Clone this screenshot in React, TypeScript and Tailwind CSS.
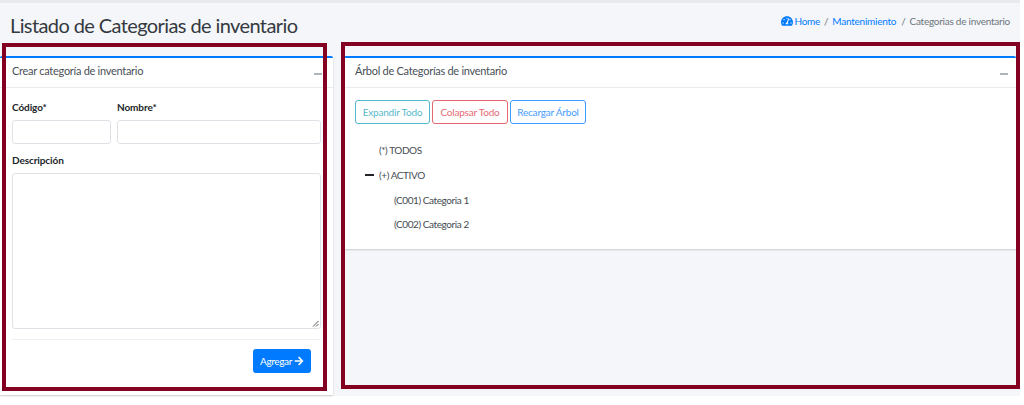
import React from "react";
import { FaTachometerAlt, FaArrowRight } from "react-icons/fa";

function Card({ title, children, className, dashCls, titleCls }: { title: string; children: React.ReactNode; className: string; dashCls: string; titleCls: string }) {
  return (
    <section className={`bg-white border-t-2 border-t-[#007bff] rounded-t-[2px] shadow-[0_1px_2px_rgba(0,0,0,0.18)] ${className}`}>
      <header className="h-[30px] flex items-center justify-between px-3 border-b border-[#e9ecef] text-[#495057] text-[11px] tracking-[-0.28px]">
        <span className={`mt-[-2px] ${titleCls}`}>{title}</span>
        <span className={`w-[8px] h-[1.5px] bg-[#adb5bd] mt-[3px] ${dashCls}`} />
      </header>
      {children}
    </section>
  );
}

function Row({ text, indent, dash }: { text: string; indent: string; dash?: boolean }) {
  return (
    <div className={`h-[24.67px] flex items-center text-[10px] tracking-[-0.42px] text-[#454c53] ${indent}`}>
      {dash && <span className="w-[9px] h-[2px] bg-[#212529] mr-[5px]" />}
      <span>{text}</span>
    </div>
  );
}

const inputCls = "block bg-white border border-[#dee2e6] rounded-[3px] h-[24px]";
const labelCls = "block text-[10px] font-bold tracking-[-0.1px] text-[#212529] leading-[14px]";
const btnCls = "h-[24px] border rounded-[3px] text-[10px] tracking-[-0.2px] whitespace-nowrap opacity-75";

export default function App() {
  return (
    <div className="relative w-[1024px] h-[405px] bg-white overflow-hidden font-['Lato','Noto_Sans',sans-serif]">
      <div className="w-[1020px] h-[396px] bg-[#f4f6f9] border-t-[3px] border-t-[#e9eaec] flex flex-col">
        <div className="h-[53px] flex items-start justify-between px-[10px] shrink-0">
          <h1 className="text-[20px] tracking-[-0.6px] leading-[28px] mt-[8px] text-[#343a40]">Listado de Categorias de inventario</h1>
          <nav className="flex items-center mt-[10px] text-[10px] tracking-[-0.25px] text-[#6c757d] leading-[16px]">
            <FaTachometerAlt size={12} className="text-[#007bff] mr-[1px]" />
            <span className="text-[#007bff]">Home</span>
            <span className="mx-[4px]">/</span>
            <span className="text-[#007bff]">Mantenimiento</span>
            <span className="ml-[5px] mr-[4px]">/</span>
            <span>Categorias de inventario</span>
          </nav>
        </div>
        <div className="flex items-start flex-1">
          <Card title="Crear categoría de inventario" className="w-[333px] h-[339px] flex flex-col" dashCls="mr-[-1px]" titleCls="">
            <div className="px-3 pt-[12px]">
              <div className="flex gap-[6px]">
                <div className="w-[99px]">
                  <label className={`${labelCls} mb-[6px]`}>Código*</label>
                  <div className={inputCls} />
                </div>
                <div className="w-[204px]">
                  <label className={`${labelCls} mb-[6px]`}>Nombre*</label>
                  <div className={inputCls} />
                </div>
              </div>
              <label className={`${labelCls} mt-[9px] mb-[6px]`}>Descripción</label>
              <div className="relative h-[156px] w-[309px] bg-white border border-[#dee2e6] rounded-[3px]">
                <svg className="absolute right-[1px] bottom-[1px]" width="7" height="7" viewBox="0 0 7 7">
                  <path d="M1 6.5 L6.5 1 M4 6.5 L6.5 4" stroke="#555" strokeWidth="1" fill="none" />
                </svg>
              </div>
              <div className="h-px bg-[#eef0f2] mt-[10px] w-[309px]" />
              <div className="flex justify-end pr-[10px] mt-[9px]">
                <button className="h-[24px] w-[58px] bg-[#007bff] rounded-[3px] text-white text-[10px] tracking-[-0.35px] flex items-center justify-center gap-[2px]">
                  Agregar <FaArrowRight size={10} />
                </button>
              </div>
            </div>
          </Card>
          <Card title="Árbol de Categorías de inventario" className="w-[672px] ml-[11px] h-[193px]" dashCls="mr-[-4px]" titleCls="ml-[-1px]">
            <div className="px-[11px] pt-[12px]">
              <div className="flex gap-[2px]">
                <button className={`${btnCls} w-[75px] border-[#17a2b8] text-[#17a2b8]`}>Expandir Todo</button>
                <button className={`${btnCls} w-[76px] border-[#dc3545] text-[#dc3545]`}>Colapsar Todo</button>
                <button className={`${btnCls} w-[76px] border-[#007bff] text-[#007bff]`}>Recargar Árbol</button>
              </div>
              <div className="mt-[14.5px]">
                <Row text="(*) TODOS" indent="pl-[24px]" />
                <Row text="(+) ACTIVO" indent="pl-[10px]" dash />
                <Row text="(C001) Categoria 1" indent="pl-[39px]" />
                <Row text="(C002) Categoria 2" indent="pl-[39px]" />
              </div>
            </div>
          </Card>
        </div>
      </div>
      <div className="absolute left-[2px] top-[43px] w-[325px] h-[348px] border-[4px] border-[#840022]" />
      <div className="absolute left-[341px] top-[42px] w-[679px] h-[347px] border-[4px] border-[#840022]" />
    </div>
  );
}
